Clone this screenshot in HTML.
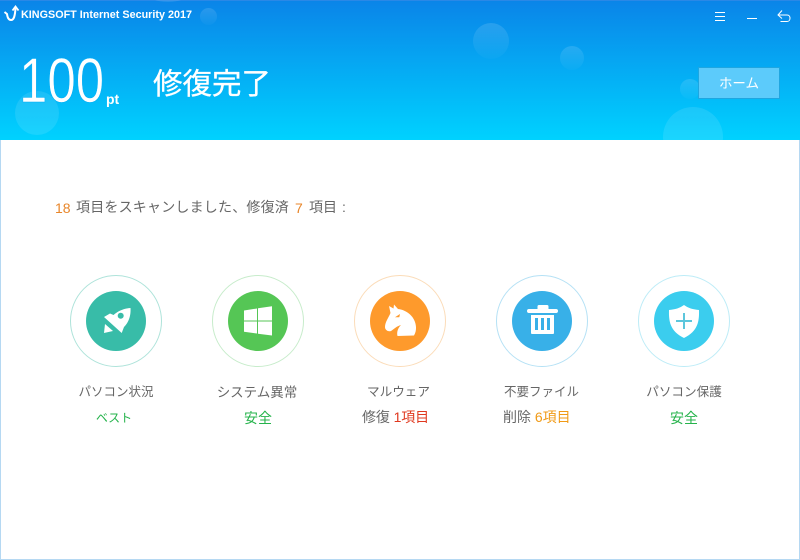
<!DOCTYPE html>
<html lang="ja"><head><meta charset="utf-8"><title>KINGSOFT Internet Security 2017</title>
<style>
html,body{margin:0;padding:0;background:#fff}
#app{position:relative;width:800px;height:560px;overflow:hidden;background:#fff;font-family:"Liberation Sans","Noto Sans CJK JP",sans-serif}
#frame{position:absolute;left:0;top:0;width:798px;height:558px;border:1px solid #b5d8f2}
#head{position:absolute;left:0;top:0;width:800px;height:140px;overflow:hidden;background:linear-gradient(#0a84e8,#00d2ff)}
.b{position:absolute;border-radius:50%;background:rgba(255,255,255,.1)}
.f{background:linear-gradient(rgba(255,255,255,.13),rgba(255,255,255,.02))}
.t{position:absolute;white-space:nowrap;line-height:1}
.c{text-align:center;width:142px}
.ring{position:absolute;top:275px;width:90px;height:90px;border-radius:50%;border:1px solid}
.disc{position:absolute;top:291px;width:60px;height:60px;border-radius:50%}
.disc svg{position:absolute;left:0;top:0}
.g{color:#666}
.ok{color:#25b34b}
.o{color:#e8862a}
</style></head><body>
<div id="app">
<div id="frame"></div>
<div id="head">
<div style="position:absolute;left:0;top:0;width:800px;height:1px;background:#2a88e6"></div>
<div class="b f" style="left:200px;top:8px;width:17px;height:17px"></div>
<div class="b" style="left:143px;top:-24px;width:50px;height:26px"></div>
<div class="b f" style="left:473px;top:23px;width:36px;height:36px"></div>
<div class="b f" style="left:560px;top:46px;width:24px;height:24px"></div>
<div class="b f" style="left:680px;top:79px;width:20px;height:20px"></div>
<div class="b" style="left:663px;top:107px;width:60px;height:60px"></div>
<div class="b" style="left:15px;top:91px;width:44px;height:44px"></div>
<svg style="position:absolute;left:0;top:0" width="22" height="24" viewBox="0 0 22 24" fill="none" stroke="#fff" stroke-width="2"><path d="M4.500 12L7 14C7.500 18 9 20 11 20 14 20 15 16 15.500 8"/><path d="M12.500 10.500L15.500 6.500 18.500 10.500" stroke-width="1.800"/></svg>
<div class="t" style="left:21px;top:10px;font-size:10.800px;font-weight:bold;color:#fff">KINGSOFT Internet Security 2017</div>
<div class="t" style="left:19px;top:50px;font-size:63px;color:#fff;-webkit-text-stroke:.6px #04aef5;transform:scaleX(.81);transform-origin:0 0">100</div>
<div class="t" style="left:106px;top:92px;font-size:14px;font-weight:bold;color:#fff">pt</div>
<div class="t" style="left:153px;top:70px;font-size:29.500px;color:#fff;-webkit-text-stroke:.3px #fff">修復完了</div>
<svg style="position:absolute;left:700px;top:0" width="100" height="30" fill="none" stroke="#fff"><path d="M15 12.500h10M15 16.500h10M15 20.500h10"/><path d="M47 18.500h10"/><path d="M82 10.500 78 15 82 18.500"/><path d="M78.500 15h8.500c2 0 3 1.500 3 3.200s-1 3.300-3 3.300h-6.500"/></svg>
<div style="position:absolute;left:698px;top:67px;width:80px;height:30px;border:1px solid #1fa6e0;background:#5ccbfb"></div>
<div class="t" style="left:698px;top:77px;width:82px;text-align:center;font-size:13.500px;color:#fff">ホーム</div>
</div>

<div class="t o" style="left:55px;top:201px;font-size:14px">18</div>
<div class="t g" style="left:76px;top:200px;font-size:14px;letter-spacing:.2px">項目をスキャンしました、修復済</div>
<div class="t o" style="left:295px;top:201px;font-size:14px">7</div>
<div class="t g" style="left:309px;top:200px;font-size:14px">項目</div>
<div class="t g" style="left:342px;top:200px;font-size:14px">:</div>

<div class="ring" style="left:70px;border-color:#aee3da"></div>
<div class="disc" style="left:86px;background:#38bca8"><svg width="60" height="60"><path fill="#fff" d="M44.500 17C38 17.500 32 20 27.500 24L24 22.500 18 26 35.700 42 38 36C43 31 45 24 44.500 17Z"/><path fill="#fff" d="M19 33L27 40 18 42Z"/><circle cx="34.700" cy="24.700" r="3" fill="#38bca8"/></svg></div>

<div class="ring" style="left:212px;border-color:#c7eccb"></div>
<div class="disc" style="left:228px;background:#55c655"><svg width="60" height="60" fill="#fff"><path d="M16 19.500l13-2v12H16zM30 17.200l14-2V29.500H30zM16 30.500h13v12l-13-1.800zM30 30.500h14v14l-14-1.800z"/></svg></div>

<div class="ring" style="left:354px;border-color:#fbdcb9"></div>
<div class="disc" style="left:370px;background:#fe9a2c"><svg width="60" height="60"><path fill="#fff" d="M19 15L23.500 17.500 24 13.500 28 18C37 19 45.500 26 46 36 46.200 39 45.500 42 44 44.500L27.500 45C26.500 41 28 37 31 34 27 35 24 38 21 40 18 41 15 39 15 36 15 31 19 26 20.500 22Z"/><path d="M25 26.300L30 23 29.300 26.300Z" fill="#fe9a2c"/></svg></div>

<div class="ring" style="left:496px;border-color:#b5e1f5"></div>
<div class="disc" style="left:512px;background:#38b0e8"><svg width="60" height="60" fill="#fff"><path d="M27 14h8a1.500 1.500 0 0 1 1.500 1.500V18H44a2 2 0 0 1 0 4H17a2 2 0 0 1 0-4h8.500v-2.500A1.500 1.500 0 0 1 27 14z"/><path fill-rule="evenodd" d="M19 24H42V42a1 1 0 0 1-1 1H20a1 1 0 0 1-1-1zM23 27v12h3V27zM29 27v12h3V27zM35 27v12h3V27z"/></svg></div>

<div class="ring" style="left:638px;border-color:#bdecf7"></div>
<div class="disc" style="left:654px;background:#3bcdee"><svg width="60" height="60"><path fill="#fff" d="M30 14c4 3 9 4.500 15 5 .3 11-.8 21-15 28C15.800 40 14.700 30 15 19c6-.5 11-2 15-5z"/><path d="M30 22v16M22 30h16" stroke="#5cc6dc" stroke-width="2" fill="none"/></svg></div>

<div class="t g c" style="left:45px;top:386px;font-size:12.500px">パソコン状況</div>
<div class="t ok c" style="left:43px;top:412px;font-size:12px">ベスト</div>
<div class="t g c" style="left:186px;top:386px;font-size:13.500px">システム異常</div>
<div class="t ok c" style="left:187px;top:411px;font-size:14px">安全</div>
<div class="t g c" style="left:327.500px;top:386px;font-size:12.600px">マルウェア</div>
<div class="t g" style="left:362px;top:410px;font-size:14px;letter-spacing:-.1px">修復 <span style="color:#e0391f">1項目</span></div>
<div class="t g c" style="left:470.500px;top:386px;font-size:12.500px">不要ファイル</div>
<div class="t g" style="left:503px;top:410px;font-size:14px">削除 <span style="color:#f09a16">6項目</span></div>
<div class="t g c" style="left:613px;top:386px;font-size:12.600px">パソコン保護</div>
<div class="t ok c" style="left:613px;top:411px;font-size:14px">安全</div>
</div>
</body></html>
